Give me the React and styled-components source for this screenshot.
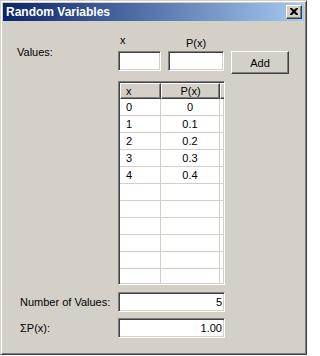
import React from 'react';
import styled, { createGlobalStyle } from 'styled-components';

const GlobalStyle = createGlobalStyle`
    body {
        margin: 0;
        background: #ffffff;
        font-family: "Liberation Sans", Arial, sans-serif;
        font-size: 11px;
        color: #000;
    }
`

const Window = styled.div`
    box-sizing: border-box;
    width: 307px;
    height: 355px;
    padding: 2px;
    background: #D4D0C8;
    border: 1px solid;
    border-color: #D4D0C8 #404040 #404040 #D4D0C8;
    box-shadow: inset 1px 1px #ffffff, inset -1px -1px #808080;
    display: flex;
    flex-direction: column;
`

const TitleBar = styled.div`
    height: 18px;
    display: flex;
    align-items: center;
    justify-content: space-between;
    padding: 0 2px 0 3px;
    background: linear-gradient(to right, #0A246A, #A6CAF0);
`

const Title = styled.span`
    color: #fff;
    font-weight: bold;
    font-size: 12px;
    line-height: 18px;
`

const CloseButton = styled.div`
    box-sizing: border-box;
    width: 16px;
    height: 14px;
    background: #D4D0C8;
    border: 1px solid;
    border-color: #fff #404040 #404040 #fff;
    box-shadow: inset -1px -1px #808080;
    display: flex;
    align-items: center;
    justify-content: center;
    padding: 0 1px 1px 0;
`

const Body = styled.div`
    padding: 13px 0 0 14px;
`

const EntryGrid = styled.div`
    display: grid;
    grid-template-columns: 94px 43px 56px 58px;
    grid-template-rows: 13px 20px;
    column-gap: 7px;
    row-gap: 4px;
`

const FieldLabel = styled.div`
    grid-column: 1;
    grid-row: 1 / 3;
    align-self: center;
    line-height: 13px;
`

const ColumnLabel = styled.div`
    grid-row: 1;
    grid-column: ${props => props.$col};
    text-align: ${props => props.$center ? "center" : "left"};
    padding-left: ${props => props.$center ? "0" : "2px"};
    line-height: 13px;
    margin-top: ${props => props.$center ? "3px" : "0"};
`

const TextBox = styled.div`
    box-sizing: border-box;
    grid-row: 2;
    height: 20px;
    width: ${props => props.$width ? props.$width + "px" : "auto"};
    background: #fff;
    border: 1px solid;
    border-color: #808080 #fff #fff #808080;
    box-shadow: inset 1px 1px #404040, inset -1px -1px #D4D0C8;
    text-align: right;
    padding: 0 2px;
    line-height: 18px;
`

const Button = styled.div`
    box-sizing: border-box;
    grid-row: 2;
    height: 23px;
    background: #D4D0C8;
    border: 1px solid;
    border-color: #fff #404040 #404040 #fff;
    box-shadow: inset -1px -1px #808080;
    display: flex;
    align-items: center;
    justify-content: center;
    font-size: 11px;
`

const Table = styled.div`
    box-sizing: border-box;
    margin: 10px 0 0 101px;
    width: 107px;
    height: 204px;
    overflow: hidden;
    background: #fff;
    border: 1px solid;
    border-color: #808080 #fff #fff #808080;
    box-shadow: inset 1px 1px #404040, inset -1px -1px #D4D0C8;
    padding: 1px;
`

const TableRow = styled.div`
    display: grid;
    grid-template-columns: 41px 59px 1fr;
`

const HeaderCell = styled.div`
    box-sizing: border-box;
    height: 16px;
    background: #D4D0C8;
    border: 1px solid;
    border-color: #fff #404040 #404040 #fff;
    box-shadow: inset -1px -1px #808080;
    line-height: 14px;
    text-align: ${props => props.$center ? "center" : "left"};
    padding-left: ${props => props.$center ? "0" : "5px"};
`

const Cell = styled.div`
    box-sizing: border-box;
    height: 17px;
    border-bottom: 1px solid #D4D0C8;
    border-right: ${props => props.$last ? "none" : "1px solid #D4D0C8"};
    line-height: 16px;
    text-align: ${props => props.$center ? "center" : "left"};
    padding-left: ${props => props.$center ? "0" : "6px"};
`

const SummaryRow = styled.div`
    display: flex;
    align-items: center;
    margin: ${props => props.$first ? "7px" : "6px"} 0 0 3px;
`

const SummaryLabel = styled.div`
    width: 98px;
    line-height: 13px;
`

const rows = [
    ["0", "0"],
    ["1", "0.1"],
    ["2", "0.2"],
    ["3", "0.3"],
    ["4", "0.4"],
    ["", ""], ["", ""], ["", ""], ["", ""], ["", ""], ["", ""],
]

export default function App() {
    return (
        <>
            <GlobalStyle />
            <Window>
                <TitleBar>
                    <Title>Random Variables</Title>
                    <CloseButton>
                        <svg width="8" height="7" viewBox="0 0 8 7">
                            <path d="M0 0h2l2 2 2-2h2v1L5.5 3.5 8 6v1H6L4 5 2 7H0V6l2.5-2.5L0 1z" fill="#000" />
                        </svg>
                    </CloseButton>
                </TitleBar>
                <Body>
                    <EntryGrid>
                        <FieldLabel>Values:</FieldLabel>
                        <ColumnLabel $col={2}>x</ColumnLabel>
                        <ColumnLabel $col={3} $center>P(x)</ColumnLabel>
                        <TextBox />
                        <TextBox />
                        <Button>Add</Button>
                    </EntryGrid>

                    <Table>
                        <TableRow>
                            <HeaderCell>x</HeaderCell>
                            <HeaderCell $center>P(x)</HeaderCell>
                            <HeaderCell />
                        </TableRow>
                        {rows.map((r, i) => (
                            <TableRow key={i}>
                                <Cell>{r[0]}</Cell>
                                <Cell $center>{r[1]}</Cell>
                                <Cell $last />
                            </TableRow>
                        ))}
                    </Table>

                    <SummaryRow $first>
                        <SummaryLabel>Number of Values:</SummaryLabel>
                        <TextBox $width={107}>5</TextBox>
                    </SummaryRow>
                    <SummaryRow>
                        <SummaryLabel>ΣP(x):</SummaryLabel>
                        <TextBox $width={107}>1.00</TextBox>
                    </SummaryRow>
                </Body>
            </Window>
        </>
    );
}
